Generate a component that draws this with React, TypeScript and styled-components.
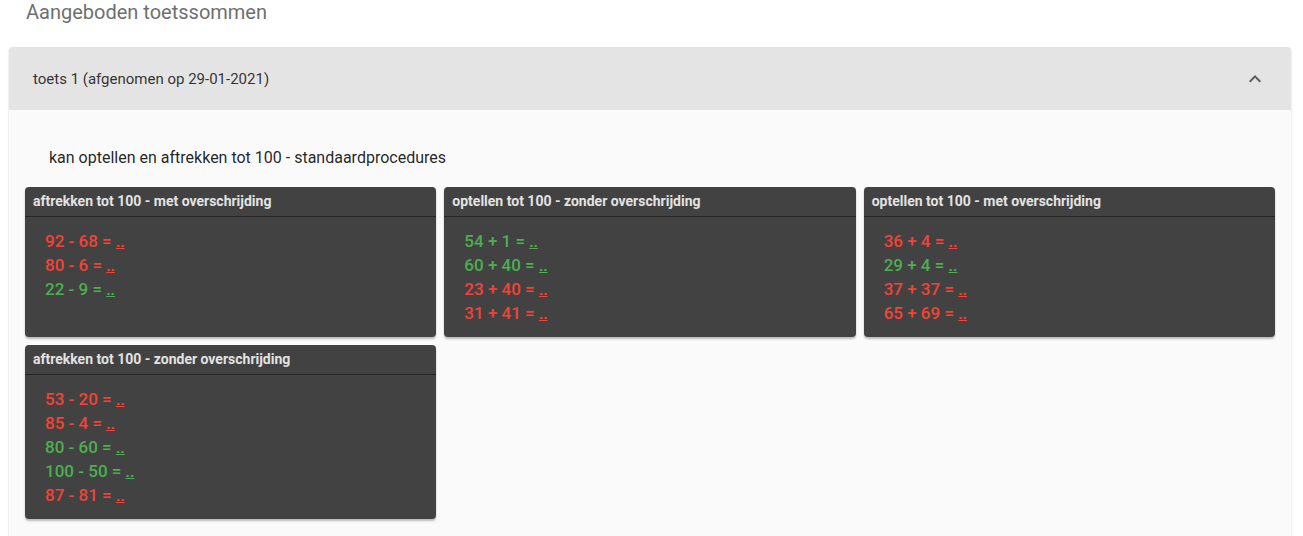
import React from "react";
import styled, { createGlobalStyle } from "styled-components";

const Global = createGlobalStyle`
  html, body { margin: 0; padding: 0; background: #fff; }
  body { font-family: Roboto, "Noto Sans", Arial, sans-serif; }
`;

const Page = styled.div`
  padding: 0 12px 0 9px;
`;

const Title = styled.h2`
  margin: 0;
  padding: 0 0 0 17px;
  font-size: 20px;
  line-height: 24px;
  font-weight: 400;
  color: #6f6f6f;
  height: 47px;
  box-sizing: border-box;
`;

const Panel = styled.section`
  background: #fafafa;
  border-radius: 4px 4px 0 0;
  box-shadow: 0 2px 1px -1px rgba(0,0,0,0.2), 0 1px 1px 0 rgba(0,0,0,0.14), 0 1px 3px 0 rgba(0,0,0,0.12);
`;

const PanelHeader = styled.div`
  height: 63px;
  display: flex;
  align-items: center;
  justify-content: space-between;
  padding: 0 24px;
  background: #e4e4e4;
  border-radius: 4px 4px 0 0;
  font-size: 15px;
  color: rgba(0,0,0,0.8);
`;

const Chevron = styled.svg`
  width: 24px;
  height: 24px;
  fill: rgba(0,0,0,0.6);
`;

const PanelBody = styled.div`
  padding: 37px 16px 20px;
`;

const Subtitle = styled.div`
  font-size: 16px;
  line-height: 22px;
  color: rgba(0,0,0,0.87);
  padding-left: 24px;
  margin-bottom: 18px;
`;

const Grid = styled.div`
  display: grid;
  grid-template-columns: repeat(3, 1fr);
  gap: 8px;
`;

const Card = styled.div`
  background: #424242;
  border-radius: 4px;
  box-shadow: 0 2px 2px rgba(0,0,0,0.25);
  overflow: hidden;
`;

const CardHeader = styled.div`
  height: 30px;
  box-sizing: border-box;
  padding: 5px 8px 0;
  font-size: 14px;
  line-height: 18px;
  font-weight: 700;
  color: #e2e2e2;
  border-bottom: 1px solid #262626;
`;

const CardBody = styled.div`
  padding: 12px 20px 12px;
`;

const Sum = styled.div<{ $ok: boolean }>`
  font-size: 17px;
  line-height: 24px;
  font-weight: 500;
  color: ${(p) => (p.$ok ? "#4caf50" : "#f44336")};
`;

const Blank = styled.span`
  text-decoration: underline;
  font-weight: 700;
  font-size: 15px;
  line-height: 0;
`;

type Item = [string, boolean];
const cards: { title: string; items: Item[] }[] = [
  {
    title: "aftrekken tot 100 - met overschrijding",
    items: [["92 - 68", false], ["80 - 6", false], ["22 - 9", true]],
  },
  {
    title: "optellen tot 100 - zonder overschrijding",
    items: [["54 + 1", true], ["60 + 40", true], ["23 + 40", false], ["31 + 41", false]],
  },
  {
    title: "optellen tot 100 - met overschrijding",
    items: [["36 + 4", false], ["29 + 4", true], ["37 + 37", false], ["65 + 69", false]],
  },
  {
    title: "aftrekken tot 100 - zonder overschrijding",
    items: [["53 - 20", false], ["85 - 4", false], ["80 - 60", true], ["100 - 50", true], ["87 - 81", false]],
  },
];

export default function App() {
  return (
    <Page>
      <Global />
      <Title>Aangeboden toetssommen</Title>
      <Panel>
        <PanelHeader>
          <span>toets 1 (afgenomen op 29-01-2021)</span>
          <Chevron viewBox="0 0 24 24">
            <path d="M7.41 15.41L12 10.83l4.59 4.58L18 14l-6-6-6 6z" />
          </Chevron>
        </PanelHeader>
        <PanelBody>
          <Subtitle>kan optellen en aftrekken tot 100 - standaardprocedures</Subtitle>
          <Grid>
            {cards.map((c) => (
              <Card key={c.title}>
                <CardHeader>{c.title}</CardHeader>
                <CardBody>
                  {c.items.map(([s, ok]) => (
                    <Sum key={s} $ok={ok}>
                      {s} = <Blank>..</Blank>
                    </Sum>
                  ))}
                </CardBody>
              </Card>
            ))}
          </Grid>
        </PanelBody>
      </Panel>
    </Page>
  );
}
